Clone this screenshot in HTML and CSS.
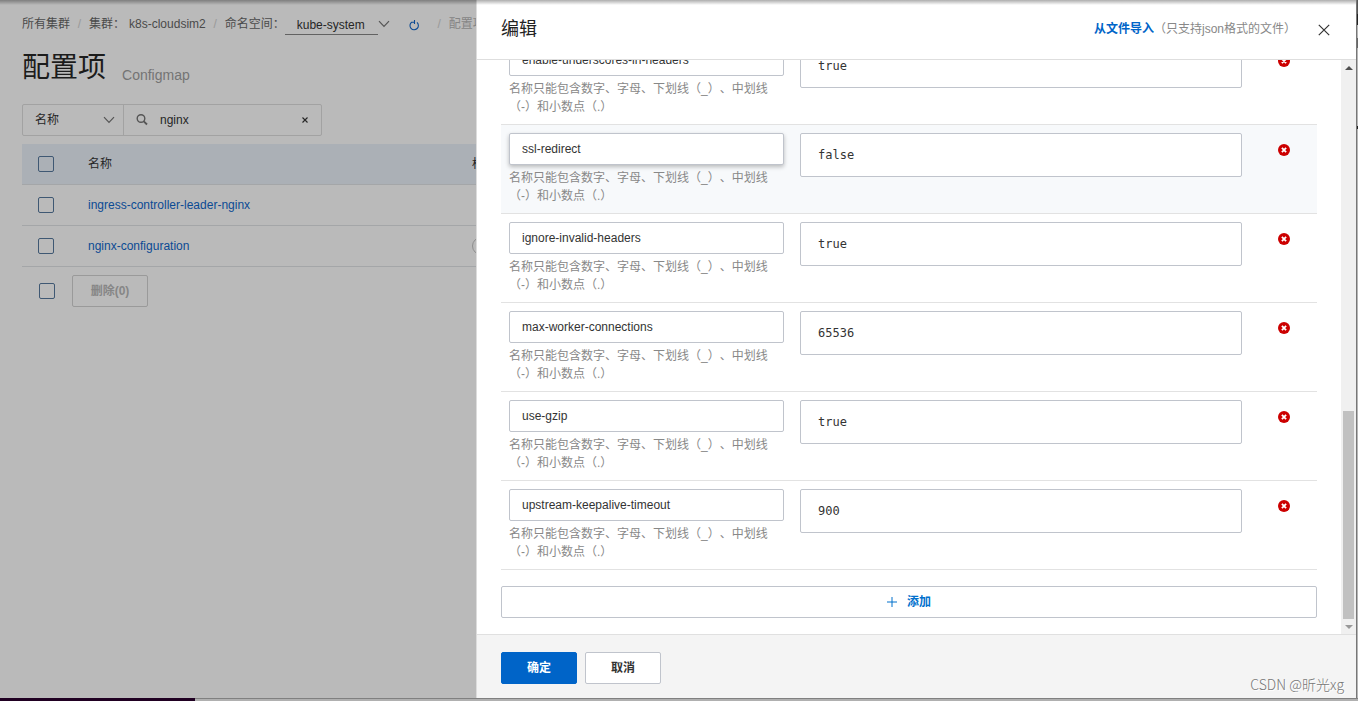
FILE: index.html
```html
<!DOCTYPE html>
<html lang="zh-CN">
<head>
<meta charset="utf-8">
<title>配置项 Configmap</title>
<link rel="stylesheet" href="styles.css">
</head>
<body>
<svg class="defs" aria-hidden="true">
  <symbol id="chevron" viewBox="0 0 12 8"><path d="M1 1.2 6 6.4 11 1.2" fill="none" stroke="currentColor" stroke-width="1.2"/></symbol>
  <symbol id="remove" viewBox="0 0 12 12"><circle cx="6" cy="6" r="6" fill="#c00"/><path d="M3.9 3.9 8.1 8.1M8.1 3.9 3.9 8.1" stroke="#fff" stroke-width="1.8"/></symbol>
</svg>
<div class="window">
  <main class="page">
    <nav class="crumbs">
      <a href="#">所有集群</a>
      <span class="slash">/</span>
      <a href="#" class="cluster"><span>集群：</span><span>k8s-cloudsim2</span></a>
      <span class="slash">/</span>
      <label for="namespace">命名空间：</label>
      <select id="namespace" class="namespace"><option>kube-system</option></select>
      <svg class="chevron"><use href="#chevron"/></svg>
      <button class="refresh" aria-label="刷新"><svg viewBox="0 0 12 12"><path d="M9 3.4A4.2 4.2 0 1 1 3.6 3.2H6.6M6.5 1V5" fill="none" stroke="currentColor" stroke-width="1.1"/></svg></button>
      <span class="slash">/</span>
      <span class="current">配置项</span>
    </nav>
    <header class="title"><h1>配置项</h1><span>Configmap</span></header>
    <div class="filter">
      <div class="filter-field">
        <select aria-label="筛选字段"><option>名称</option></select>
        <svg class="chevron"><use href="#chevron"/></svg>
      </div>
      <div class="search">
        <svg class="magnifier" viewBox="0 0 12 12"><circle cx="5" cy="4.5" r="3.8" fill="none" stroke="currentColor" stroke-width="1.4"/><path d="M7.8 7.3 11 10.5" stroke="currentColor" stroke-width="1.8"/></svg>
        <input type="text" value="nginx" aria-label="搜索">
        <button class="clear" aria-label="清除"><svg viewBox="0 0 8 8"><path d="M1.5 1.5 6.5 6.5M6.5 1.5 1.5 6.5" stroke="currentColor" stroke-width="1.1"/></svg></button>
      </div>
    </div>
    <table class="configs">
      <thead><tr><th class="check"><input type="checkbox" aria-label="全选"></th><th class="name">名称</th><th>标签</th></tr></thead>
      <tbody>
        <tr><td class="check"><input type="checkbox" aria-label="选择 ingress-controller-leader-nginx"></td><td><a href="#">ingress-controller-leader-nginx</a></td><td></td></tr>
        <tr><td class="check"><input type="checkbox" aria-label="选择 nginx-configuration"></td><td><a href="#">nginx-configuration</a></td><td><span class="tag"></span></td></tr>
      </tbody>
    </table>
    <div class="bulk"><input type="checkbox" aria-label="全选"><button disabled>删除(0)</button></div>
  </main>

  <section class="drawer" role="dialog" aria-labelledby="drawer-title">
    <header class="drawer-head">
      <h2 id="drawer-title">编辑</h2>
      <a href="#" class="import">从文件导入</a>
      <span class="import-note">（只支持json格式的文件）</span>
      <button class="close" aria-label="关闭"><svg viewBox="0 0 12 12"><path d="M.8.8 11.2 11.2M11.2.8.8 11.2" stroke="currentColor" stroke-width="1.2"/></svg></button>
    </header>
    <div class="drawer-body">
      <div class="entries">
        <div class="entry"><div class="key"><input type="text" value="enable-underscores-in-headers" aria-label="名称"><p>名称只能包含数字、字母、下划线（_）、中划线（-）和小数点（.）</p></div><textarea rows="1" aria-label="值">true</textarea><button aria-label="删除"><svg><use href="#remove"/></svg></button></div>
        <div class="entry active"><div class="key"><input type="text" value="ssl-redirect" aria-label="名称"><p>名称只能包含数字、字母、下划线（_）、中划线（-）和小数点（.）</p></div><textarea rows="1" aria-label="值">false</textarea><button aria-label="删除"><svg><use href="#remove"/></svg></button></div>
        <div class="entry"><div class="key"><input type="text" value="ignore-invalid-headers" aria-label="名称"><p>名称只能包含数字、字母、下划线（_）、中划线（-）和小数点（.）</p></div><textarea rows="1" aria-label="值">true</textarea><button aria-label="删除"><svg><use href="#remove"/></svg></button></div>
        <div class="entry"><div class="key"><input type="text" value="max-worker-connections" aria-label="名称"><p>名称只能包含数字、字母、下划线（_）、中划线（-）和小数点（.）</p></div><textarea rows="1" aria-label="值">65536</textarea><button aria-label="删除"><svg><use href="#remove"/></svg></button></div>
        <div class="entry"><div class="key"><input type="text" value="use-gzip" aria-label="名称"><p>名称只能包含数字、字母、下划线（_）、中划线（-）和小数点（.）</p></div><textarea rows="1" aria-label="值">true</textarea><button aria-label="删除"><svg><use href="#remove"/></svg></button></div>
        <div class="entry"><div class="key"><input type="text" value="upstream-keepalive-timeout" aria-label="名称"><p>名称只能包含数字、字母、下划线（_）、中划线（-）和小数点（.）</p></div><textarea rows="1" aria-label="值">900</textarea><button aria-label="删除"><svg><use href="#remove"/></svg></button></div>
        <button class="add"><svg viewBox="0 0 10 10"><path d="M5 0V10M0 5H10" stroke="currentColor"/></svg>添加</button>
      </div>
      <div class="scrollbar" aria-hidden="true"><i class="up"></i><i class="thumb"></i><i class="down"></i></div>
    </div>
    <footer class="drawer-foot"><button class="primary">确定</button><button>取消</button></footer>
  </section>
</div>
<div class="desktop-edge"><i></i></div>
<div class="watermark">CSDN @昕光xg</div>
</body>
</html>
```
FILE: styles.css
```css
* { box-sizing: border-box; }

body {
  margin: 0;
  height: 100vh;
  overflow: hidden;
  display: flex;
  flex-direction: column;
  background: linear-gradient(#555 0 14px, #222 14px 25px, #b6b6b6 25px 38px, #666 38px 48px, #b6b6b6 48px 126px, #222 126px 129px, #b6b6b6 129px);
  color: #333;
  font: 12px/18px "Liberation Sans", "Noto Sans CJK SC", sans-serif;
  text-spacing-trim: space-all;
}

button, input, select, textarea { font: inherit; color: inherit; margin: 0; }
button { padding: 0; border: 0; background: none; }
select { appearance: none; border: 0; background: none; }
a { text-decoration: none; color: inherit; }
svg { display: block; }
.defs { position: absolute; width: 0; height: 0; }

.window {
  position: relative;
  flex: 1;
  min-height: 0;
  display: flex;
  margin-right: 1px;
  border-right: 1px solid #777;
}

/* soft shadow under the top edge of the window */
.window::after {
  content: "";
  position: absolute;
  inset: 0 0 auto;
  height: 5px;
  background: linear-gradient(rgba(0, 0, 0, .32), rgba(0, 0, 0, 0));
}

/* dimmed page */
.page {
  flex: 1;
  min-width: 0;
  overflow: hidden;
  padding: 12px 0 0 22px;
  background: #bababa;
  color: #262626;
}

.crumbs { display: flex; align-items: center; height: 24px; color: #4a4a4a; white-space: nowrap; }
.cluster { display: flex; gap: 4px; }
.slash { width: 19px; text-align: center; color: #999; flex: none; }
.crumbs .current { color: #858585; }
.namespace { flex: none; width: 93px; height: 22px; padding: 2px 12px 0; border-bottom: 1px solid #626262; color: #262626; }
.chevron { flex: none; width: 12px; height: 8px; color: #555; }
.refresh { flex: none; margin: 2px 10px 0 18px; color: #0b4a94; }
.refresh svg { width: 12px; height: 12px; }

.title { display: flex; align-items: flex-end; gap: 16px; margin: 10px 0 14px; height: 44px; }
.title h1 { margin: 0; font-size: 28px; line-height: 44px; font-weight: 400; color: #1c1c1c; }
.title span { font-size: 14px; line-height: 30px; color: #747474; }

.filter { display: flex; width: 300px; height: 32px; border: 1px solid #a2a2a2; border-radius: 2px; }
.filter-field { display: flex; align-items: center; width: 101px; padding: 0 8px 0 12px; border-right: 1px solid #a2a2a2; }
.filter-field select { flex: 1; min-width: 0; padding: 0; }
.search { flex: 1; min-width: 0; display: flex; align-items: center; padding: 0 12px; }
.magnifier { flex: none; width: 12px; height: 12px; color: #555; }
.search input { flex: 1; min-width: 0; margin-left: 12px; padding: 0; border: 0; background: none; }
.clear svg { width: 8px; height: 8px; }

.configs { width: 850px; margin-top: 8px; border-collapse: separate; border-spacing: 0; table-layout: fixed; }
.configs th, .configs td { height: 41px; padding: 0 16px; border-bottom: 1px solid #a4a6a8; text-align: left; font-weight: 400; }
.configs th { background: #abb0b6; }
.configs .check { width: 50px; }
.configs .name { width: 384px; }
.configs a { color: #0b4a94; }
.tag { display: block; width: 80px; height: 18px; border: 1px solid #8e8e8e; border-radius: 9px; }
.page input[type="checkbox"] { appearance: none; display: block; flex: none; width: 16px; height: 16px; border: 1px solid #3f5873; border-radius: 2px; }

.bulk { display: flex; align-items: center; gap: 17px; padding: 8px 0 0 17px; }
.bulk button { width: 76px; height: 32px; border: 1px solid #9a9a9a; border-radius: 2px; font-weight: 700; color: #868686; }

/* edit drawer */
.drawer {
  flex: none;
  width: 880px;
  max-width: 100%;
  display: flex;
  flex-direction: column;
  background: #fff;
  border-left: 1px solid #dcdcdc;
}

.drawer-head { display: flex; align-items: center; flex: none; height: 60px; padding: 0 26px 2px 24px; border-bottom: 1px solid #dedede; }
.drawer-head h2 { flex: 1; margin: 0; font-size: 18px; line-height: 26px; font-weight: 400; color: #222; }
.import { font-weight: 700; color: #0064c8; }
.import-note { color: #888; }
.close { margin: 2px 0 0 22px; color: #333; }
.close svg { width: 12px; height: 12px; }

.drawer-body { flex: 1; min-height: 0; display: flex; }

/* the list is shown scrolled to its end */
.entries {
  flex: 1;
  min-width: 0;
  display: flex;
  flex-direction: column;
  justify-content: flex-end;
  overflow: hidden;
  padding: 0 24px 16px;
}

.entry {
  flex: none;
  display: grid;
  grid-template-columns: 275px 1fr 67px;
  align-items: start;
  padding: 8px 0 8px 8px;
  border-bottom: 1px solid #e2e2e2;
}
.entry.active { background: #f7f9fb; }
.entry input, .entry textarea { display: block; border: 1px solid #c0c4cc; border-radius: 2px; background: #fff; }
.entry input { width: 100%; height: 32px; padding: 0 12px; }
.entry.active input { box-shadow: 0 2px 4px rgba(0, 0, 0, .25); }
.entry p { margin: 4px 0 0; color: #888; }
.entry textarea { height: 44px; margin: 0 8px 0 16px; padding: 12px 17px; resize: none; overflow: hidden; font-family: "DejaVu Sans Mono", monospace; }
.entry button { justify-self: center; height: 34px; }
.entry svg { width: 12px; height: 12px; }

.add {
  flex: none;
  display: flex;
  align-items: center;
  justify-content: center;
  gap: 10px;
  height: 32px;
  margin-top: 16px;
  border: 1px solid #c0c4cc;
  border-radius: 2px;
  font-weight: 700;
  color: #0070cc;
}
.add svg { width: 10px; height: 10px; }

.scrollbar { flex: none; display: flex; flex-direction: column; align-items: center; width: 15px; padding: 6px 0 5px; background: #f0f0f0; }
.up, .down { border: 4px solid transparent; border-top: 0; border-bottom: 4px solid #505050; }
.down { border-bottom: 0; border-top: 4px solid #999; }
.thumb { width: 11px; height: 37%; margin: auto 0 6px; background: #c1c1c1; }

.drawer-foot { flex: none; display: flex; align-items: center; gap: 8px; height: 64px; padding: 2px 24px 0; border-top: 1px solid #e0e0e0; background: #f4f4f4; }
.drawer-foot button { width: 76px; height: 32px; border: 1px solid #c0c4cc; border-radius: 2px; background: #fff; font-weight: 700; }
.drawer-foot .primary { border-color: #0064c8; background: #0064c8; color: #fff; }

/* desktop visible below the window */
.desktop-edge { flex: none; height: 3px; border-top: 1px solid #808080; background: #b0b0b0; }
.desktop-edge i { display: block; width: 195px; height: 3px; margin-top: -1px; background: #200022; }

.watermark { position: absolute; right: 14px; bottom: 8px; font: 300 14px/18px "Noto Sans CJK SC", sans-serif; color: #777; text-shadow: 1px 1px 0 #fff; }
```
